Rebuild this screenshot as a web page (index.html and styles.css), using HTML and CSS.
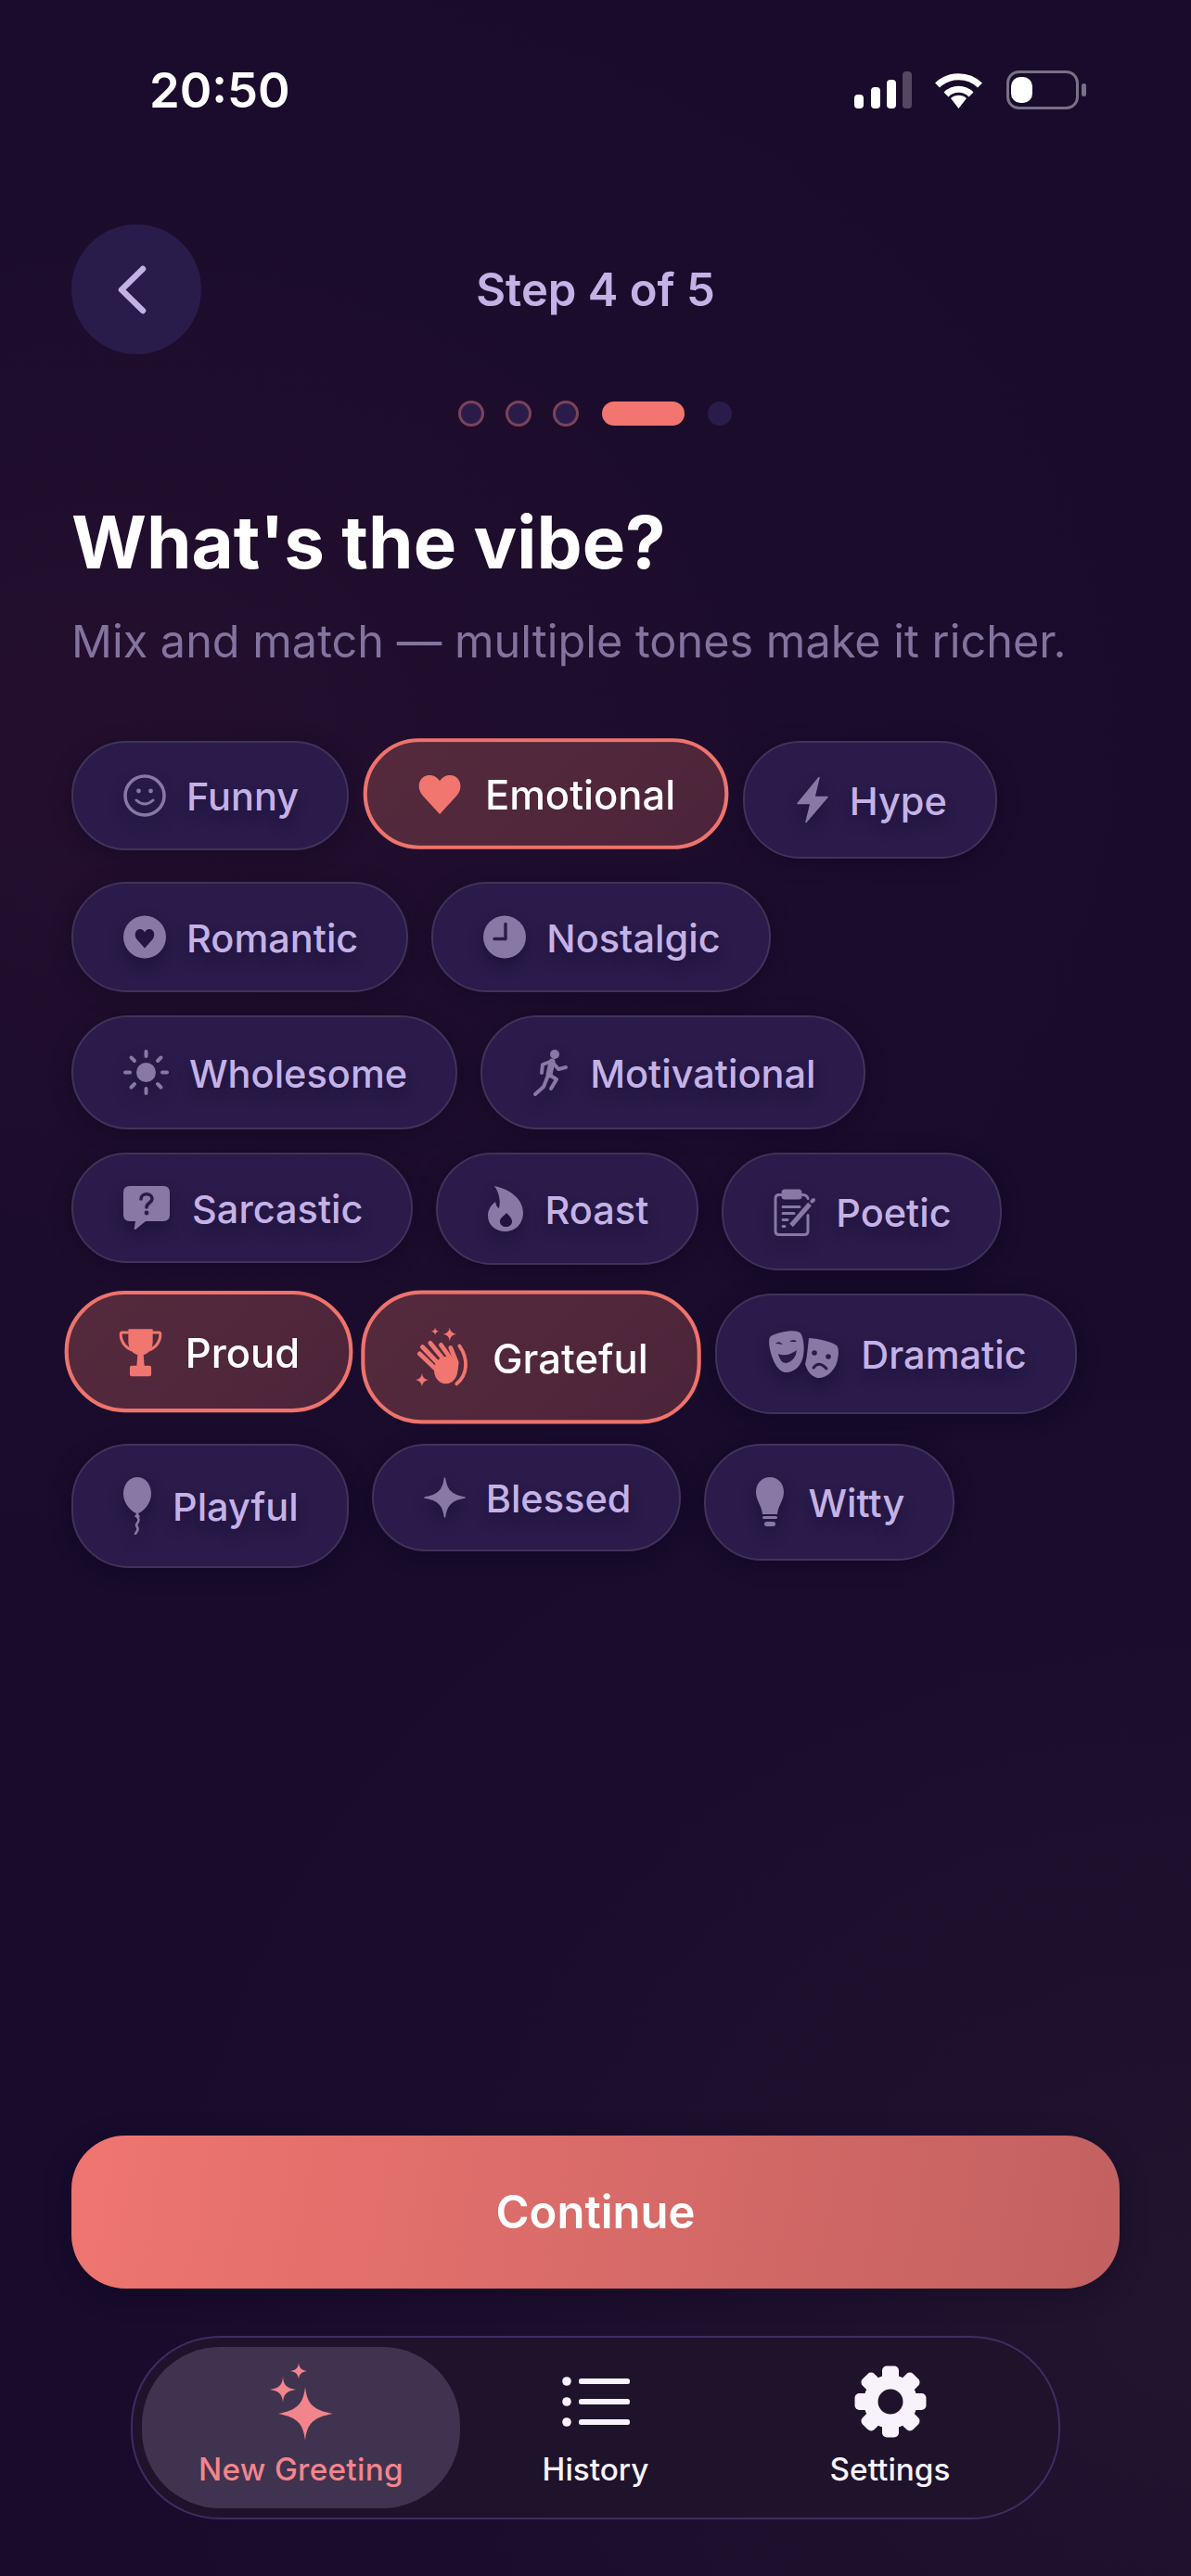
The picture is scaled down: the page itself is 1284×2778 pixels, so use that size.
FILE: index.html
```html
<!DOCTYPE html>
<html lang="en">
<head>
  <meta charset="UTF-8" />
  <meta name="viewport" content="width=device-width, initial-scale=1.0" />
  <title>What's the vibe?</title>
  <link rel="stylesheet" href="styles.css">
</head>
<body>
  <div class="screen">
    <div class="status-bar">
      <span class="time">20:50</span>
      <div class="status-icons">
        <svg width="62" height="40" viewBox="0 0 62 40" fill="#fff">
          <rect x="0" y="25" width="10" height="15" rx="4"/>
          <rect x="18" y="17" width="10" height="23" rx="4"/>
          <rect x="35" y="9" width="10" height="31" rx="4"/>
          <rect x="52" y="0" width="10" height="40" rx="4" opacity=".25"/>
        </svg>
        <svg class="wifi" width="53" height="40" viewBox="0 0 53 40" fill="none" stroke="#fff" stroke-width="7">
          <path d="M3.5 15 A33 33 0 0 1 49.500 15"/>
          <path d="M13 25 A19 19 0 0 1 40 25"/>
          <path d="M26.500 40 L18 29 A13 13 0 0 1 35 29 Z" fill="#fff" stroke="none"/>
        </svg>
        <svg class="battery" width="86" height="42" viewBox="0 0 86 42">
          <rect x="1.500" y="1.500" width="75" height="39" rx="12" fill="none" stroke="#fff" stroke-opacity=".42" stroke-width="3"/>
          <rect x="5" y="7" width="23" height="28" rx="10" fill="#fff"/>
          <rect x="81" y="14" width="5" height="14" rx="2.500" fill="#fff" fill-opacity=".42"/>
        </svg>
      </div>
    </div>

    <div class="top-nav">
      <button class="back-btn" type="button">
        <svg width="34" height="53" viewBox="0 0 34 53" fill="none" stroke="#c4b2e6" stroke-width="6.500" stroke-linecap="round" stroke-linejoin="round">
          <path d="M29 4 L6 26.500 L29 49"/>
        </svg>
      </button>
      <span class="step-label">Step 4 of 5</span>
    </div>

    <div class="dots">
      <span class="dot done"></span>
      <span class="dot done"></span>
      <span class="dot done"></span>
      <span class="dot current"></span>
      <span class="dot"></span>
    </div>

    <h1 class="title">What's the vibe?</h1>
    <p class="subtitle">Mix and match — multiple tones make it richer.</p>

    <div class="chips">
      <div class="chip">
        <svg width="46" height="46" viewBox="0 0 46 46" fill="none" stroke="currentColor">
          <circle cx="23" cy="23" r="21" stroke-width="3.500"/>
          <circle cx="16.500" cy="18" r="2.400" fill="currentColor" stroke="none"/>
          <circle cx="29.500" cy="18" r="2.400" fill="currentColor" stroke="none"/>
          <path d="M14 28 Q23 36 32 28" stroke-width="3" stroke-linecap="round"/>
        </svg>
        <span>Funny</span>
      </div>
      <div class="chip selected">
        <svg width="45" height="41" viewBox="0 0 45 41" fill="currentColor">
          <path d="M22.500 41 L5 22 C-2 14 1 2 11 1 C16 .5 20 3 22.500 7 C25 3 29 .5 34 1 C44 2 47 14 40 22 Z"/>
        </svg>
        <span>Emotional</span>
      </div>
      <div class="chip">
        <svg width="37" height="55" viewBox="0 -.5 37 55" fill="currentColor" stroke="currentColor" stroke-width="1.500" stroke-linejoin="round">
          <path d="M26 3 L3 31 H17 L12 51 L35 24 H21 Z"/>
        </svg>
        <span>Hype</span>
      </div>
      <div class="chip">
        <svg width="46" height="47" viewBox="0 -.5 46 47" fill="currentColor">
          <path fill-rule="evenodd" d="M23 0 A23 23 0 1 1 23 46 A23 23 0 1 1 23 0 Z M23 35 L14.500 25.500 C11 21 13 14.500 18 14.500 C20.500 14.500 22 16 23 18 C24 16 25.500 14.500 28 14.500 C33 14.500 35 21 31.500 25.500 Z"/>
        </svg>
        <span>Romantic</span>
      </div>
      <div class="chip">
        <svg width="46" height="47" viewBox="0 -.5 46 47" fill="currentColor">
          <circle cx="23" cy="23" r="23"/>
          <path d="M24 9 V25 H12" fill="none" stroke="#2a1b4a" stroke-width="3.400" stroke-linecap="round" stroke-linejoin="round"/>
        </svg>
        <span>Nostalgic</span>
      </div>
      <div class="chip">
        <svg width="49" height="51" viewBox="0 0 49 51" fill="currentColor" stroke="currentColor" stroke-width="4" stroke-linecap="round">
          <circle cx="24.500" cy="25.500" r="10.500" stroke="none"/>
          <path d="M24.500 3 V8 M24.500 43 V48 M2 25.500 H7 M42 25.500 H47 M8.500 9.500 L12 13 M37 38 L40.500 41.500 M8.500 41.500 L12 38 M37 13 L40.500 9.500"/>
        </svg>
        <span>Wholesome</span>
      </div>
      <div class="chip">
        <svg width="40" height="51" viewBox="-1 0 40 51" fill="none" stroke="currentColor" stroke-width="4" stroke-linecap="round" stroke-linejoin="round">
          <circle cx="23" cy="6" r="5" fill="currentColor" stroke="none"/>
          <path d="M20 14 L17 28" stroke-width="7"/>
          <path d="M21 15 L27 22 L35 20"/>
          <path d="M18 14 L10 17 L9 26"/>
          <path d="M17 28 L25 33 L19 43"/>
          <path d="M15 31 L11 41 L2 49"/>
        </svg>
        <span>Motivational</span>
      </div>
      <div class="chip">
        <svg width="52" height="47" viewBox="0 0 52 47" fill="currentColor">
          <path d="M7 0 H43 Q50 0 50 7 V31 Q50 38 43 38 H24 L13 47 Q11 47 12 44 L13 38 H7 Q0 38 0 31 V7 Q0 0 7 0 Z"/>
          <path d="M19 14 C19 7 31 7 31 14 C31 18 25 18 25 23" fill="none" stroke="#2a1b4a" stroke-width="3.600" stroke-linecap="round"/>
          <circle cx="25" cy="29" r="2.400" fill="#2a1b4a"/>
        </svg>
        <span>Sarcastic</span>
      </div>
      <div class="chip">
        <svg width="39" height="49" viewBox="0 0 39 49" fill="currentColor">
          <path fill-rule="evenodd" d="M7 0 C22 3 38 13 38 29 C38 40 30 49 19 49 C8 49 0 42 0 32 C0 25 4 20 8 17 C9 21 10 23 12 24 C14 16 12 7 7 0 Z M20 29 C23 32 26 35 26 38 C26 42 23 44 19.500 44 C16 44 13 42 13 38 C13 34 17 33 20 29 Z"/>
        </svg>
        <span>Roast</span>
      </div>
      <div class="chip">
        <svg width="45" height="55" viewBox="0 -.5 45 55" fill="none" stroke="currentColor" stroke-width="3" stroke-linecap="round" stroke-linejoin="round">
          <path d="M8 9 H6 Q2 9 2 13 V48 Q2 52 6 52 H33 Q37 52 37 48 V31"/>
          <path d="M31 9 Q36 9 37 13"/>
          <rect x="10" y="4.500" width="19" height="8" rx="2" fill="currentColor"/>
          <path d="M10 22 H28 M10 29 H22 M10 36 H15 M10 43 H12"/>
          <path d="M19 42 L39 19" stroke-width="5" stroke-linecap="butt"/>
          <path d="M41.500 16 L43 14.500" stroke-width="4"/>
        </svg>
        <span>Poetic</span>
      </div>
      <div class="chip selected">
        <svg width="44" height="53" viewBox="0 0 44 53" fill="none" stroke="currentColor">
          <path d="M10 4 H34 V17 C34 25 28 30 22 30 C16 30 10 25 10 17 Z" fill="currentColor" stroke-linejoin="round"/>
          <path d="M10 7 H3 C1 7 1.500 11 2.500 14 C4 19 8 23 13 25 M34 7 H41 C43 7 42.500 11 41.500 14 C40 19 36 23 31 25" stroke-width="3"/>
          <path d="M19 29 L18 42 H26 L25 29 Z" fill="currentColor" stroke="none"/>
          <rect x="11" y="41" width="22" height="11" rx="2" fill="currentColor" stroke="none"/>
        </svg>
        <span>Proud</span>
      </div>
      <div class="chip selected">
        <svg width="55" height="65" viewBox="0 0 55 65" fill="currentColor" stroke-linecap="round">
          <path d="M20 2 Q20.500 5.500 24 6 Q20.500 6.500 20 10 Q19.500 6.500 16 6 Q19.500 5.500 20 2 Z"/>
          <path d="M35 2 Q35.500 8 42 9 Q35.500 10 35 16 Q34.500 10 28 9 Q34.500 8 35 2 Z"/>
          <path d="M6.500 49 Q7 55 13 56 Q7 57 6.500 63 Q6 57 0 56 Q6 55 6.500 49 Z"/>
          <ellipse cx="31" cy="46" rx="12" ry="14"/>
          <g fill="none" stroke="currentColor" stroke-width="4.600">
            <path d="M4 29 L22 46"/>
            <path d="M7 22 L26 42"/>
            <path d="M15 18 L32 39"/>
            <path d="M26 20 L38 37"/>
            <path d="M36 23 L42 38 L41 46"/>
            <path d="M45 21 C54 34 54 50 42 60" stroke-width="3.600"/>
          </g>
        </svg>
        <span>Grateful</span>
      </div>
      <div class="chip">
        <svg width="79" height="58" viewBox="-1 0 79 58" fill="currentColor">
          <g transform="translate(0 3)">
            <path d="M3 7 C10 3 25 0 32 2 C36 3 37 7 38 12 C39 18 39 26 37 32 C34 41 26 47 18 46 C10 44 6 35 3 25 C1 18 0 9 3 7 Z"/>
            <path d="M44 9 C52 9 69 13 74 17 C77 20 76 30 74 36 C71 45 62 53 53 52 C46 50 42 44 40 37 C42 30 43 18 44 9 Z"/>
            <g fill="#2a1b4a">
              <path d="M8 15 Q12 11 16 16 Q12 15 8 15 Z"/>
              <path d="M23 13 Q28 9 31 13 Q27 13 23 13 Z"/>
              <path d="M11 26 Q20 30 31 22 Q30 33 20 36 Q13 36 11 26 Z"/>
              <circle cx="50" cy="25" r="2.800"/>
              <circle cx="65" cy="29" r="2.800"/>
            </g>
            <path d="M49 41 Q55 33 63 42" fill="none" stroke="#2a1b4a" stroke-width="3" stroke-linecap="round"/>
          </g>
        </svg>
        <span>Dramatic</span>
      </div>
      <div class="chip">
        <svg width="31" height="62" viewBox="0 0 31 62" fill="currentColor">
          <path d="M15 0 C24 0 30 8 30 18 C30 28 22 37 16 39 L18 43 H12 L14 39 C8 37 0 28 0 18 C0 8 6 0 15 0 Z"/>
          <path d="M15 43 C20 48 11 50 15 54 C17 57 14 59 13 61" fill="none" stroke="currentColor" stroke-width="2.600" stroke-linecap="round"/>
        </svg>
        <span>Playful</span>
      </div>
      <div class="chip">
        <svg width="45" height="44" viewBox="0 0 45 44" fill="currentColor" stroke="currentColor" stroke-width="1.500" stroke-linejoin="round">
          <path d="M22.500 1 C24 14 30 20 44 22 C30 24 24 30 22.500 43 C21 30 15 24 1 22 C15 20 21 14 22.500 1 Z"/>
        </svg>
        <span>Blessed</span>
      </div>
      <div class="chip">
        <svg width="34" height="54" viewBox="0 0 34 54" fill="currentColor">
          <path d="M15 0 C24 0 30 7 30 16 C30 25 24 30 23 40 H7 C6 30 0 25 0 16 C0 7 6 0 15 0 Z"/>
          <rect x="7" y="42" width="16" height="3" rx="1.500"/>
          <rect x="9" y="48" width="12" height="5" rx="2.500"/>
        </svg>
        <span>Witty</span>
      </div>
    </div>

    <button class="continue-btn" type="button">Continue</button>

    <nav class="tab-bar">
      <div class="tab active">
        <svg width="68" height="84" viewBox="0 0 68 84" fill="#f2858b">
          <path d="M38 26 C40 44 46 51 68 55 C46 59 40 66 38 84 C36 66 30 59 9 55 C30 51 36 44 38 26 Z"/>
          <path d="M14 15 C14.500 24 18 27.500 28 29 C18 30.500 14.500 34 14 43 C13.500 34 10 30.500 0 29 C10 27.500 13.500 24 14 15 Z"/>
          <path d="M31 0 C31.400 5.500 34 8 40 9 C34 10 31.400 12.500 31 18 C30.600 12.500 28 10 22 9 C28 8 30.600 5.500 31 0 Z"/>
        </svg>
        <span>New Greeting</span>
      </div>
      <div class="tab">
        <svg width="73" height="84" viewBox="0 0 73 84" fill="#f8f2fc">
          <g transform="translate(0 15)">
            <circle cx="5" cy="5" r="4.800"/>
            <circle cx="5" cy="27" r="4.800"/>
            <circle cx="5" cy="49" r="4.800"/>
            <rect x="18" y="2" width="55" height="6" rx="2.500"/>
            <rect x="18" y="24" width="55" height="6" rx="2.500"/>
            <rect x="18" y="46" width="55" height="6" rx="2.500"/>
          </g>
        </svg>
        <span>History</span>
      </div>
      <div class="tab">
        <svg width="78" height="84" viewBox="0 0 78 84" fill="#f8f2fc">
          <g transform="translate(39 42)">
            <circle r="29"/>
            <rect x="-9" y="-38.500" width="18" height="77" rx="5"/>
            <rect x="-9" y="-38.500" width="18" height="77" rx="5" transform="rotate(45)"/>
            <rect x="-9" y="-38.500" width="18" height="77" rx="5" transform="rotate(90)"/>
            <rect x="-9" y="-38.500" width="18" height="77" rx="5" transform="rotate(135)"/>
            <circle r="13.500" fill="#1e132b"/>
          </g>
        </svg>
        <span>Settings</span>
      </div>
    </nav>
  </div>
</body>
</html>
```

FILE: styles.css
```css
* {
  box-sizing: border-box;
}

body {
  margin: 0;
  padding: 0;
  font-family: Inter, "Noto Sans", sans-serif;
  background-color: #180b2c;
}

button {
  font-family: inherit;
  border: none;
  padding: 0;
}

.screen {
  width: 1284px;
  height: 2778px;
  padding: 0 77px 61px;
  display: flex;
  flex-direction: column;
  overflow: hidden;
  background:
    radial-gradient(ellipse 1100px 850px at 120px 800px, rgba(75, 25, 50, 0.24), transparent),
    radial-gradient(ellipse 1100px 1000px at 1284px 2500px, rgba(55, 38, 50, 0.32), transparent),
    #180b2c;
}

/* status bar */
.status-bar {
  display: flex;
  justify-content: space-between;
  align-items: center;
  height: 42px;
  margin-top: 76px;
  padding: 0 36px 0 84px;
}

.time {
  font-size: 52.500px;
  font-weight: 600;
  color: #fff;
}

.status-icons {
  display: flex;
  align-items: center;
}

.wifi {
  margin-left: 24px;
}

.battery {
  margin-left: 25px;
}

/* header */
.top-nav {
  display: grid;
  grid-template-columns: 140px 1fr 140px;
  align-items: center;
  margin-top: 124px;
}

.back-btn {
  width: 140px;
  height: 140px;
  border-radius: 50%;
  background-color: #2a1c4a;
  display: flex;
  align-items: center;
  justify-content: center;
  padding-right: 10px;
}

.step-label {
  text-align: center;
  font-size: 49px;
  font-weight: 600;
  color: #c4b2e6;
}

.dots {
  display: flex;
  justify-content: center;
  align-items: center;
  gap: 23px;
  margin-top: 50px;
  padding-right: 2px;
}

.dot {
  width: 26px;
  height: 26px;
  border-radius: 50%;
  background-color: #2a1c4a;
}

.dot.done {
  width: 28px;
  height: 28px;
  border: 3px solid #7a4358;
}

.dot.current {
  width: 89px;
  margin: 0 2px;
  border-radius: 13px;
  background-color: #f2766f;
}

.title {
  margin: 78px 0 0;
  font-size: 78px;
  line-height: 94px;
  font-weight: 700;
  color: #fff;
}

.subtitle {
  margin: 31px 0 0;
  font-size: 48.600px;
  line-height: 58px;
  color: #83739e;
}

/* tone chips */
.chips {
  display: flex;
  flex-wrap: wrap;
  align-items: flex-start;
  gap: 25px;
  margin-top: 78px;
}

.chip {
  display: flex;
  align-items: center;
  gap: 22px;
  padding: 34px 52px 34px 54px;
  border: 2px solid #40335a;
  border-radius: 62px;
  background-color: #2a1b4a;
  color: #8878a6;
  box-shadow: 0 4px 22px rgba(10, 4, 25, 0.35);
}

.chip svg {
  flex: none;
  filter: drop-shadow(0 8px 8px rgba(14, 6, 40, 0.45));
}

.chip span {
  padding-top: 2px;
  font-size: 41.500px;
  line-height: 40px;
  font-weight: 500;
  color: #c4b2e6;
  text-shadow: 0 8px 14px rgba(14, 6, 40, 0.4);
}

.chip.selected {
  gap: 24px;
  padding: 32px 50px 32px 52px;
  border: 4px solid #ee736c;
  background: linear-gradient(135deg, #552a3d, #4c2439);
  color: #f0766f;
  box-shadow: none;
  transform: scale(1.05);
}

.chip.selected span {
  color: #fff;
  text-shadow: none;
}

.chip.selected svg {
  filter: none;
}

/* bottom */
.continue-btn {
  margin-top: auto;
  height: 165px;
  border-radius: 58px;
  background: linear-gradient(100deg, #ef7570, #c26161);
  color: #fff;
  font-size: 49px;
  font-weight: 600;
  box-shadow: 0 6px 30px rgba(10, 4, 25, 0.3);
}

.tab-bar {
  display: grid;
  grid-template-columns: 343px 292px 343px;
  width: 1002px;
  height: 198px;
  margin: 51px 0 0 64px;
  padding: 10px;
  border: 2px solid #3f2c63;
  border-radius: 96px;
  background-color: #1e132b;
}

.tab {
  display: flex;
  flex-direction: column;
  align-items: center;
  padding-top: 17px;
  border-radius: 84px;
  color: #f8f2fc;
  font-size: 33.300px;
  line-height: 40px;
  font-weight: 500;
}

.tab span {
  margin-top: 11px;
}

.tab.active {
  background-color: #40334f;
  color: #f2858b;
}

.tab.active span {
  letter-spacing: 0.3px;
}
```
